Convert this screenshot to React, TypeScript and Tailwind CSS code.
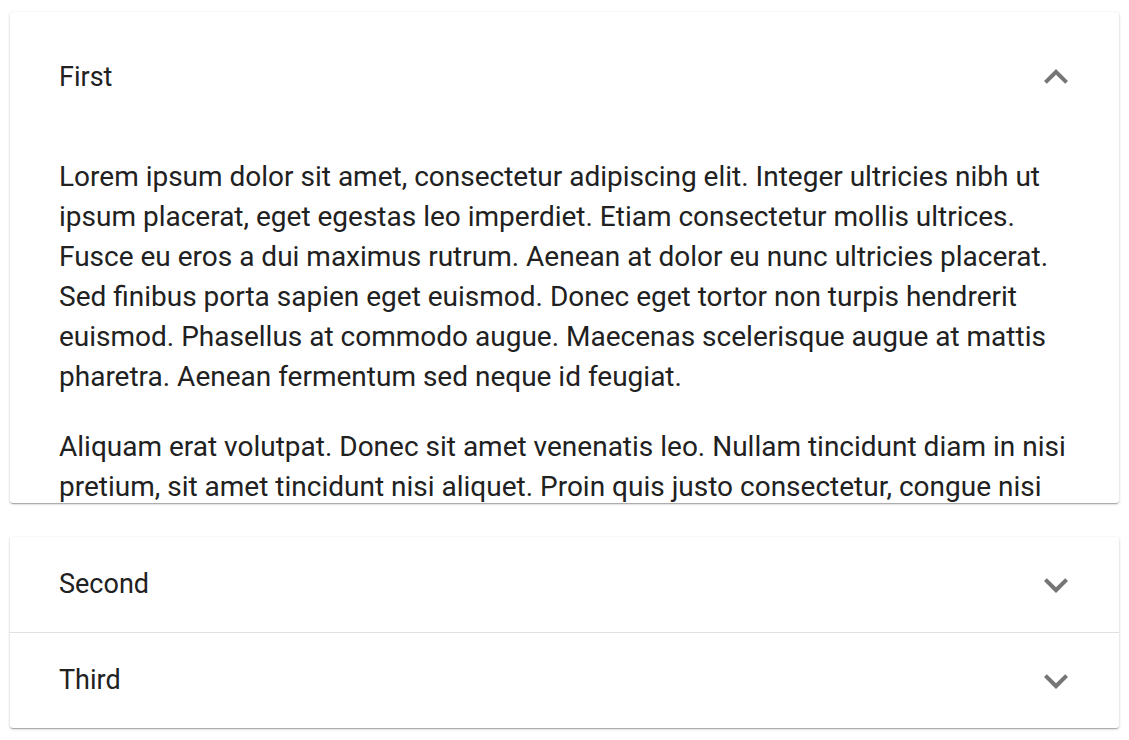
const cardShadow =
  "shadow-[0_1px_3px_rgba(0,0,0,0.2),0_1px_1px_rgba(0,0,0,0.14),0_2px_1px_-1px_rgba(0,0,0,0.12)]";

const Chevron = ({ up }: { up?: boolean }) => (
  <svg viewBox="0 0 24 24" className={`h-[48px] w-[48px] fill-[#757575] ${up ? "rotate-180" : ""}`}>
    <path d="M16.59 8.59L12 13.17 7.41 8.59 6 10l6 6 6-6z" />
  </svg>
);

const Header = ({ title, open }: { title: string; open?: boolean }) => (
  <div
    className={`flex items-center justify-between pl-[49px] pr-[39px] ${
      open ? "h-[130px]" : "h-[95px]"
    }`}
  >
    <span className="text-[27px] text-[#212121]">{title}</span>
    <Chevron up={open} />
  </div>
);

const App = () => {
  return (
    <div className="min-h-[740px] bg-white px-[10px] pt-[12px] font-['Roboto',sans-serif]">
      <div className={`h-[491px] overflow-hidden rounded-[3px] bg-white ${cardShadow}`}>
        <Header title="First" open />
        <div className="space-y-[30px] whitespace-nowrap pl-[49px] pt-[15px] text-[28px] leading-[40px] text-[#212121]">
          <p>
            Lorem ipsum dolor sit amet, consectetur adipiscing elit. Integer ultricies nibh ut
            <br />
            ipsum placerat, eget egestas leo imperdiet. Etiam consectetur mollis ultrices.
            <br />
            Fusce eu eros a dui maximus rutrum. Aenean at dolor eu nunc ultricies placerat.
            <br />
            Sed finibus porta sapien eget euismod. Donec eget tortor non turpis hendrerit
            <br />
            euismod. Phasellus at commodo augue. Maecenas scelerisque augue at mattis
            <br />
            pharetra. Aenean fermentum sed neque id feugiat.
          </p>
          <p>
            Aliquam erat volutpat. Donec sit amet venenatis leo. Nullam tincidunt diam in nisi
            <br />
            pretium, sit amet tincidunt nisi aliquet. Proin quis justo consectetur, congue nisi
          </p>
        </div>
      </div>

      <div className={`mt-[34px] rounded-[3px] bg-white ${cardShadow}`}>
        <Header title="Second" />
        <div className="border-t border-[#e0e0e0]">
          <Header title="Third" />
        </div>
      </div>
    </div>
  );
};

export default App;
